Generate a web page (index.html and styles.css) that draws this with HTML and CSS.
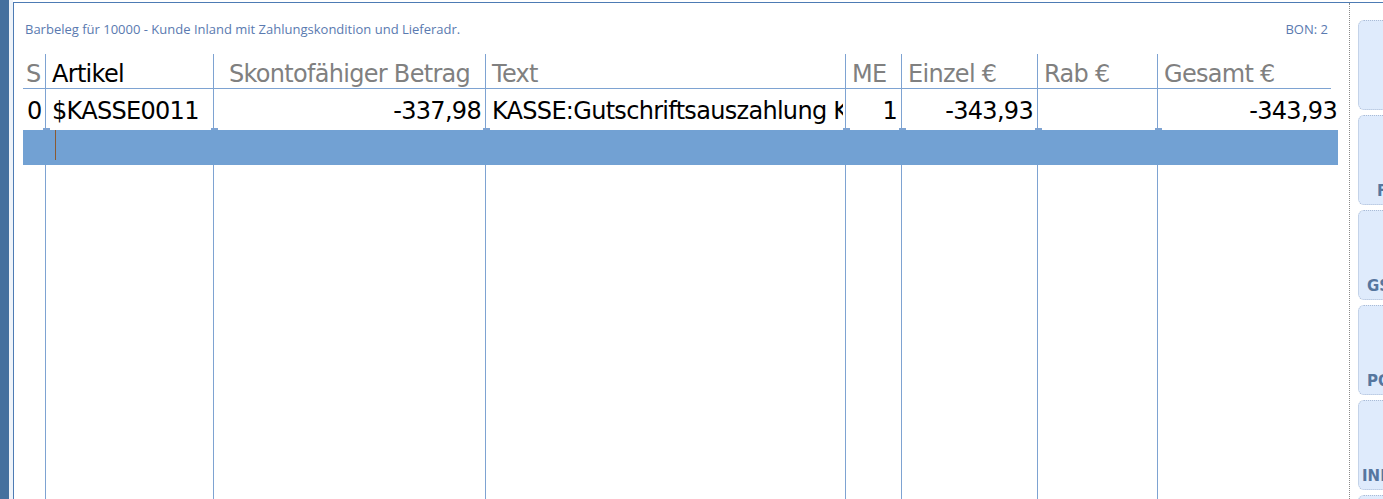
FILE: index.html
```html
<!DOCTYPE html>
<html lang="de">
<head>
<meta charset="utf-8">
<title>Kasse</title>
<link rel="stylesheet" href="styles.css">
</head>
<body>
<div class="app">
  <div class="rail"></div>
  <div class="rail-gap"></div>
  <div class="window">
    <div class="main">
      <div class="info">
        <span class="info-title">Barbeleg für 10000 - Kunde Inland mit Zahlungskondition und Lieferadr.</span>
        <span class="info-bon">BON: 2</span>
      </div>
      <div class="table">
        <div class="row head">
          <div class="cell first">S</div>
          <div class="cell col active">Artikel</div>
          <div class="cell col center">Skontofähiger Betrag</div>
          <div class="cell col">Text</div>
          <div class="cell col">ME</div>
          <div class="cell col">Einzel €</div>
          <div class="cell col">Rab €</div>
          <div class="cell col">Gesamt €</div>
        </div>
        <div class="row data">
          <div class="cell first">0</div>
          <div class="cell col">$KASSE0011</div>
          <div class="cell col right">-337,98</div>
          <div class="cell col clipcell"><span class="clip">KASSE:Gutschriftsauszahlung K</span></div>
          <div class="cell col right">1</div>
          <div class="cell col right">-343,93</div>
          <div class="cell col right"></div>
          <div class="cell col right last">-343,93</div>
        </div>
        <div class="selected">
          <div class="caret"></div>
        </div>
        <div class="row filler">
          <div class="cell first"></div>
          <div class="cell col"></div>
          <div class="cell col"></div>
          <div class="cell col"></div>
          <div class="cell col"></div>
          <div class="cell col"></div>
          <div class="cell col"></div>
          <div class="cell col"></div>
        </div>
      </div>
    </div>
    <div class="side">
      <div class="btn"><span class="btn-label">&nbsp;</span></div>
      <div class="btn"><span class="btn-label pad-f">F2 FUNKTION</span></div>
      <div class="btn"><span class="btn-label pad-gs">GS DRUCK</span></div>
      <div class="btn"><span class="btn-label pad-po">POSITION</span></div>
      <div class="btn"><span class="btn-label pad-in">INFO</span></div>
      <div class="btn"><span class="btn-label">&nbsp;</span></div>
    </div>
  </div>
</div>
</body>
</html>
```

FILE: styles.css
```css
* { box-sizing: border-box; }

html, body {
  margin: 0;
  padding: 0;
  width: 1383px;
  height: 499px;
  overflow: hidden;
  background: #ffffff;
}

.app {
  display: flex;
  height: 499px;
  font-family: "DejaVu Sans", Verdana, sans-serif;
}

.rail {
  width: 9px;
  flex-shrink: 0;
  background: #45709e;
}

.rail-gap {
  width: 4px;
  flex-shrink: 0;
  background: #eef3f9;
}

.window {
  flex: 1;
  display: flex;
  margin-top: 2px;
  border-top: 1px solid #4d7bb4;
  border-left: 1px solid #4d7bb4;
  min-width: 0;
}

.main {
  width: 1335px;
  flex-shrink: 0;
  display: flex;
  flex-direction: column;
}

.info {
  height: 51px;
  padding: 18px 21px 0 11px;
  display: flex;
  justify-content: space-between;
  align-items: flex-start;
  font-family: "Open Sans", "DejaVu Sans", sans-serif;
  font-size: 13px;
  line-height: 16px;
  color: #5a7ab0;
}

.table {
  margin-left: 9px;
  flex: 1;
  display: flex;
  flex-direction: column;
  font-size: 24px;
  letter-spacing: -0.7px;
  line-height: 28px;
}

.row {
  display: grid;
  grid-template-columns: 22px 168px 272px 360px 56px 136px 120px 1fr;
  width: 1315px;
}

.cell {
  white-space: nowrap;
  overflow: hidden;
  padding: 0 4px 0 6px;
}

.cell.first {
  padding-left: 3px;
  padding-right: 0;
}

.col {
  border-left: 1px solid #7ea3d2;
}

.head {
  width: 1308px;
  height: 35px;
  border-bottom: 1px solid #7ea3d2;
  color: #808080;
}

.head .cell {
  padding-top: 6px;
}

.head .active {
  color: #000000;
}

.head .center {
  text-align: center;
  padding-left: 0;
  padding-right: 0;
}

.data {
  height: 41px;
  color: #000000;
}

.data .cell {
  padding-top: 8px;
  overflow: visible;
}

.data .first {
  padding-left: 4px;
}

.data .col {
  position: relative;
}

.data .col::after {
  content: "";
  position: absolute;
  left: -3px;
  bottom: 0;
  width: 7px;
  height: 2px;
  background: #7ea3d2;
}

.data .right {
  text-align: right;
}

.data .last {
  padding-right: 1px;
}

.clipcell {
  padding-right: 2px;
}

.clip {
  display: block;
  overflow: hidden;
}

.selected {
  width: 1315px;
  height: 35px;
  background: #72a1d3;
  padding-left: 32px;
}

.caret {
  width: 1px;
  height: 30px;
  background: #8a5a33;
}

.filler {
  flex: 1;
}

.side {
  flex: 1;
  min-width: 0;
  overflow: hidden;
  border-left: 1px dotted #8a8a8a;
  padding: 17px 0 0 8px;
  display: flex;
  flex-direction: column;
  gap: 5px;
}

.btn {
  width: 100px;
  height: 90px;
  flex-shrink: 0;
  border: 1px dotted #a9bbd6;
  border-radius: 6px;
  background: #dfebfc;
  display: flex;
  align-items: flex-end;
  padding-bottom: 5px;
}

.btn-label {
  font-family: "DejaVu Sans", Verdana, sans-serif;
  font-weight: bold;
  font-size: 15px;
  line-height: 15px;
  color: #56769f;
  white-space: nowrap;
}

.pad-f { padding-left: 18px; }
.pad-gs { padding-left: 8px; }
.pad-po { padding-left: 8px; }
.pad-in { padding-left: 3px; }
```
